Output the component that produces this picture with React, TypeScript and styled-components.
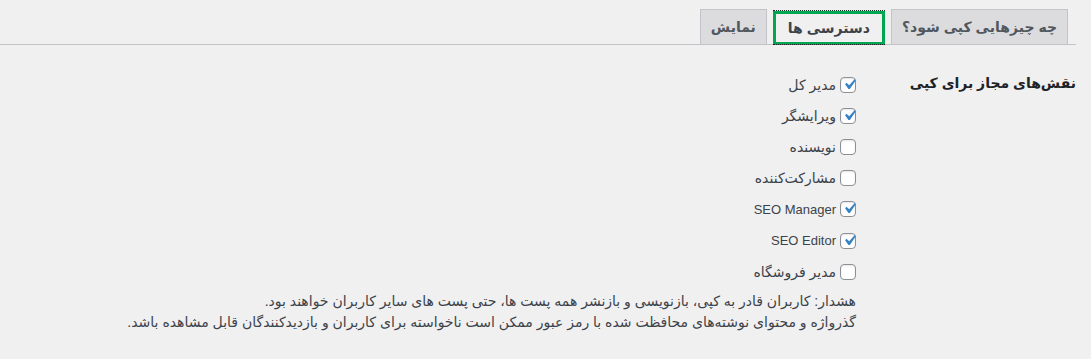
import React from "react";
import styled, { createGlobalStyle } from "styled-components";

const GlobalStyle = createGlobalStyle`
  html, body {
    margin: 0;
    padding: 0;
    background: #f0f0f1;
  }
  body {
    font-family: "Liberation Sans", "DejaVu Sans", sans-serif;
    font-size: 14px;
    color: #3c434a;
    direction: rtl;
  }
  * { box-sizing: border-box; }
`;

const Wrap = styled.div`
  padding: 0 15px 0 0;
  direction: rtl;
`;

const TabBar = styled.nav`
  display: flex;
  align-items: flex-end;
  gap: 6px;
  padding: 8px 8px 0 0;
  border-bottom: 1px solid #c3c4c7;
  height: 45px;
`;

const Tab = styled.a<{ $active?: boolean; $pad: number }>`
  position: relative;
  display: block;
  font-size: 14px;
  font-weight: 700;
  line-height: 24px;
  text-decoration: none;
  white-space: nowrap;
  cursor: pointer;
  ${({ $active, $pad }) =>
    $active
      ? `
    height: 34px;
    margin-bottom: -1px;
    padding: 2px ${$pad - 2}px 0;
    border: 3px solid #00a650;
    background: #f0f0f1;
    color: #3c434a;
    &::before {
      content: "";
      position: absolute;
      top: -4px;
      bottom: -3px;
      left: -3px;
      right: -3px;
      border-top: 1px dotted #1d2327;
      border-bottom: 1px dotted #1d2327;
      pointer-events: none;
    }
  `
      : `
    height: 35px;
    padding: 5px ${$pad}px 0;
    border: 1px solid #c3c4c7;
    border-bottom: none;
    background: #dcdcde;
    color: #50575e;
  `}
`;

const FormRow = styled.div`
  display: flex;
  align-items: flex-start;
  margin-top: 9px;
`;

const Th = styled.div`
  width: 210px;
  flex: none;
  padding: 20px 0 20px 10px;
  font-size: 14px;
  font-weight: 700;
  line-height: 18px;
  color: #1d2327;
`;

const Td = styled.div`
  flex: 1;
  padding: 15px 10px;
`;

const RoleList = styled.div`
  display: flex;
  flex-direction: column;
`;

const RoleRow = styled.label`
  display: flex;
  align-items: center;
  gap: 4px;
  height: 31.2px;
  font-size: 14px;
  color: #3c434a;
  cursor: pointer;
`;

const Box = styled.span`
  position: relative;
  flex: none;
  width: 16px;
  height: 16px;
  border: 1px solid #8c8f94;
  border-radius: 4px;
  background: #fff;
  box-shadow: inset 0 1px 2px rgba(0, 0, 0, 0.1);
`;

const Check = styled.svg`
  position: absolute;
  top: -4px;
  right: -5px;
  width: 21px;
  height: 21px;
`;

const Latin = styled.span`
  font-family: "Liberation Sans", sans-serif;
  font-size: 13px;
  direction: ltr;
`;

const Description = styled.p`
  margin: 4px 0 0;
  font-size: 14px;
  line-height: 21px;
  color: #3c434a;
`;

const CheckBox = ({ checked }: { checked: boolean }) => (
  <Box>
    {checked && (
      <Check viewBox="0 0 20 20">
        <path
          d="M14.83 4.89l1.34.94-5.81 8.38H9.02L5.78 9.67l1.34-1.25 2.57 2.4z"
          fill="#3582c4"
        />
      </Check>
    )}
  </Box>
);

const roles: { label: string; checked: boolean; latin?: boolean }[] = [
  { label: "مدیر کل", checked: true },
  { label: "ویرایشگر", checked: true },
  { label: "نویسنده", checked: false },
  { label: "مشارکت‌کننده", checked: false },
  { label: "SEO Manager", checked: true, latin: true },
  { label: "SEO Editor", checked: true, latin: true },
  { label: "مدیر فروشگاه", checked: false },
];

export default function App() {
  return (
    <>
      <GlobalStyle />
      <Wrap>
        <TabBar>
          <Tab $pad={10}>چه چیزهایی کپی شود؟</Tab>
          <Tab $active $pad={14}>دسترسی ها</Tab>
          <Tab $pad={10}>نمایش</Tab>
        </TabBar>
        <FormRow>
          <Th>نقش‌های مجاز برای کپی</Th>
          <Td>
            <RoleList>
              {roles.map((r) => (
                <RoleRow key={r.label}>
                  <CheckBox checked={r.checked} />
                  {r.latin ? <Latin>{r.label}</Latin> : <span>{r.label}</span>}
                </RoleRow>
              ))}
            </RoleList>
            <Description>
              هشدار: کاربران قادر به کپی، بازنویسی و بازنشر همه پست ها، حتی پست های سایر کاربران خواهند بود.
              <br />
              گذرواژه و محتوای نوشته‌های محافظت شده با رمز عبور ممکن است ناخواسته برای کاربران و بازدیدکنندگان قابل مشاهده باشد.
            </Description>
          </Td>
        </FormRow>
      </Wrap>
    </>
  );
}
